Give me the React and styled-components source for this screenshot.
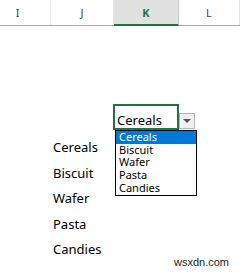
import styled, { createGlobalStyle } from "styled-components";

const GlobalStyle = createGlobalStyle`
  html, body {
    margin: 0;
    padding: 0;
    background: #fff;
    overflow: hidden;
  }
  body {
    font-family: "Noto Sans", "Open Sans", sans-serif;
  }
`;

const COLS = "51px 63px 65px 1fr";
const ROW_H = 25.6;

const Sheet = styled.div`
  position: relative;
  width: 240px;
  height: 272px;
  overflow: hidden;
  background: #fff;
`;

const Header = styled.div`
  display: grid;
  grid-template-columns: ${COLS};
  height: 25px;
  border-bottom: 1px solid #ababab;
`;

const HeadCell = styled.div`
  display: flex;
  align-items: center;
  justify-content: center;
  padding-right: ${(p) => (p.$shift ? "15px" : "0")};
  font-size: 11px;
  color: ${(p) => (p.$active ? "#217346" : "#444")};
  font-weight: ${(p) => (p.$active ? 700 : 400)};
  background: ${(p) => (p.$active ? "#e1e1e1" : "#fff")};
  border-right: 1px solid ${(p) => (p.$active ? "#c6c6c6" : "#e4e4e4")};
  border-bottom: ${(p) => (p.$active ? "2px solid #217346" : "none")};
  margin-bottom: ${(p) => (p.$active ? "-1px" : "0")};
`;

const Row = styled.div`
  display: grid;
  grid-template-columns: ${COLS};
  height: ${ROW_H}px;
`;

const Cell = styled.div`
  position: relative;
  display: flex;
  align-items: flex-end;
  padding: 0 0 0 2px;
  font-size: 13px;
  line-height: 13px;
  color: #000;
`;

const ActiveCell = styled.div`
  position: relative;
  box-sizing: border-box;
  margin: 1px 0 0 -1px;
  height: 26px;
  border: 2px solid #217346;
  display: flex;
  align-items: flex-end;
  padding: 0 0 1px 2px;
  font-size: 13px;
  line-height: 13px;
  color: #000;
`;

const ArrowButton = styled.div`
  position: absolute;
  left: calc(100% + 2px);
  bottom: -1px;
  width: 16px;
  height: 16px;
  box-sizing: border-box;
  background: #f0f0f0;
  border: 1px solid #b5b5b5;
  display: flex;
  align-items: center;
  justify-content: center;
  &::after {
    content: "";
    border-left: 4px solid transparent;
    border-right: 4px solid transparent;
    border-top: 4px solid #555;
    margin-top: 1px;
  }
`;

const Popup = styled.ul`
  position: absolute;
  top: 100%;
  left: 0;
  margin: 2px 0 0 0;
  padding: 0;
  list-style: none;
  width: 82px;
  box-sizing: border-box;
  border: 1px solid #000;
  background: #fff;
  z-index: 2;
`;

const Option = styled.li`
  height: 12.8px;
  line-height: 12.8px;
  padding-left: 3px;
  font-size: 11px;
  color: ${(p) => (p.$selected ? "#fff" : "#000")};
  background: ${(p) => (p.$selected ? "#0078d7" : "transparent")};
`;

const Watermark = styled.div`
  position: absolute;
  right: 11px;
  bottom: 4px;
  font-family: "Liberation Sans", Arial, sans-serif;
  font-size: 11px;
  color: #222;
`;

const items = ["Cereals", "Biscuit", "Wafer", "Pasta", "Candies"];

const App = () => {
  const rows = Array.from({ length: 9 }, (_, i) => i);
  return (
    <Sheet>
      <GlobalStyle />
      <Header>
        <HeadCell $shift>I</HeadCell>
        <HeadCell>J</HeadCell>
        <HeadCell $active>K</HeadCell>
        <HeadCell>L</HeadCell>
      </Header>
      {rows.map((r) => (
        <Row key={r}>
          <Cell />
          <Cell>{r >= 4 ? items[r - 4] : ""}</Cell>
          {r === 3 ? (
            <ActiveCell>
              Cereals
              <ArrowButton />
              <Popup>
                {items.map((it, i) => (
                  <Option key={it} $selected={i === 0}>
                    {it}
                  </Option>
                ))}
              </Popup>
            </ActiveCell>
          ) : (
            <Cell />
          )}
          <Cell />
        </Row>
      ))}
      <Watermark>wsxdn.com</Watermark>
    </Sheet>
  );
};

export default App;
